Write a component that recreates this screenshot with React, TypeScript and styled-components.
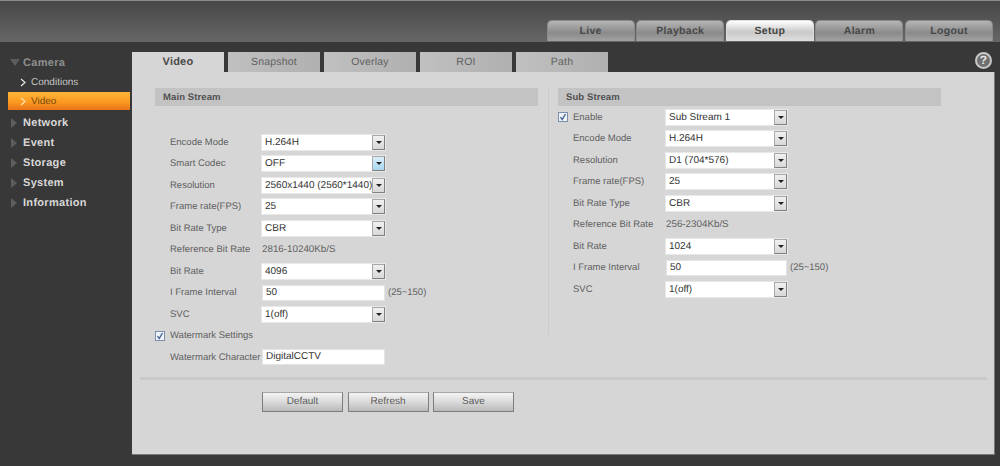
import React from "react";
import styled, { createGlobalStyle } from "styled-components";

const Global = createGlobalStyle`
  html, body { margin: 0; padding: 0; background: #383838; }
  * { box-sizing: border-box; }
`;

const Page = styled.div`
  position: relative;
  width: 1000px;
  height: 466px;
  overflow: hidden;
  background: #383838;
  font-family: "Liberation Sans", Arial, sans-serif;
  font-size: 10px;
  color: #5f5f5f;
  text-rendering: geometricPrecision;
  display: flex;
  flex-direction: column;
`;

const Header = styled.header`
  height: 42px;
  flex: none;
  padding: 20px 7px 0 0;
  display: flex;
  justify-content: flex-end;
  gap: 1.6px;
  border-top: 1px solid #8c8c8c;
  background: linear-gradient(#474747, #666666);
`;

const NavTab = styled.div<{ $active?: boolean }>`
  width: 88px;
  height: 21px;
  margin-top: -1px;
  border-radius: 5px 5px 0 0;
  border: 1px solid ${(p) => (p.$active ? "#dddddd" : "#8a8a8a")};
  border-bottom: 0;
  background: ${(p) =>
    p.$active
      ? "linear-gradient(#ffffff 0%, #c9c9c9 55%, #dedede 100%)"
      : "linear-gradient(#b5b5b5 0%, #8a8a8a 60%, #a2a2a2 100%)"};
  color: ${(p) => (p.$active ? "#444444" : "#484848")};
  font-size: 10.5px;
  font-weight: bold;
  letter-spacing: 0.3px;
  line-height: 21px;
  text-align: center;
`;

const Body = styled.div`
  flex: 1;
  display: flex;
  min-height: 0;
`;

const Sidebar = styled.nav`
  width: 132px;
  flex: none;
  padding: 10px 2px 0 8px;
`;

const MenuItem = styled.div<{ $dim?: boolean }>`
  height: 20px;
  padding-top: 1px;
  display: flex;
  align-items: center;
  gap: 2px;
  margin-left: 2px;
  font-size: 11px;
  font-weight: bold;
  letter-spacing: 0.3px;
  color: ${(p) => (p.$dim ? "#8f8f8f" : "#d8d8d8")};
`;

const MenuArrow = styled.svg`
  width: 11px;
  height: 10px;
  flex: none;
`;

const SubItem = styled.div<{ $active?: boolean }>`
  height: ${(p) => (p.$active ? "18px" : "20px")};
  margin-bottom: ${(p) => (p.$active ? "2px" : "0")};
  padding-left: 12px;
  padding-top: 1px;
  display: flex;
  align-items: center;
  gap: 4px;
  color: ${(p) => (p.$active ? "#7a4a10" : "#c4c4c4")};
  background: ${(p) =>
    p.$active ? "linear-gradient(#ffb53a, #fb9a20 55%, #e8741a)" : "transparent"};
`;

const Chevron = styled.svg`
  width: 7px;
  height: 9px;
  flex: none;
`;

const Main = styled.main`
  flex: 1;
  min-width: 0;
  padding: 10px 5px 11px 0;
  display: flex;
  flex-direction: column;
`;

const TabBar = styled.div`
  height: 20px;
  flex: none;
  display: flex;
  gap: 4px;
`;

const SubTab = styled.div<{ $active?: boolean }>`
  width: 92px;
  line-height: 20px;
  text-align: center;
  font-size: ${(p) => (p.$active ? "11px" : "10.5px")};
  font-weight: ${(p) => (p.$active ? "bold" : "normal")};
  letter-spacing: 0.2px;
  color: ${(p) => (p.$active ? "#4a4a4a" : "#606060")};
  background: ${(p) =>
    p.$active ? "#d6d6d6" : "linear-gradient(90deg, #c0c0c0, #b0b0b0)"};
`;

const HelpIcon = styled.div`
  position: absolute;
  left: 975px;
  top: 52px;
  width: 17px;
  height: 17px;
  border-radius: 50%;
  border: 2px solid #c8c8c8;
  background: #707070;
  color: #e8e8e8;
  font-size: 12px;
  font-weight: bold;
  line-height: 13px;
  text-align: center;
`;

const Panel = styled.section`
  flex: 1;
  background: #d6d6d6;
  border-right: 1px solid #777777;
  border-bottom: 1px solid #777777;
  padding-top: 16px;
  display: flex;
  flex-direction: column;
`;

const Columns = styled.div`
  height: 289px;
  flex: none;
  padding-left: 23px;
  display: flex;
`;

const Column = styled.div`
  width: 383px;
  flex: none;
`;

const ColumnRule = styled.div`
  width: 1px;
  height: 247px;
  flex: none;
  margin: 0 9px 0 10px;
  background: #cbcbcb;
`;

const StreamTitle = styled.h3<{ $gap: number }>`
  margin: 0 0 ${(p) => p.$gap}px;
  height: 18px;
  padding-left: 8px;
  background: #c3c3c3;
  color: #505050;
  font-size: 9.5px;
  font-weight: bold;
  line-height: 19px;
  letter-spacing: 0.1px;
`;

const Row = styled.div<{ $labelWidth: number; $flush?: boolean }>`
  height: 21.5px;
  padding-left: ${(p) => (p.$flush ? "0" : "15px")};
  display: grid;
  grid-template-columns: ${(p) => p.$labelWidth}px auto 1fr;
  align-items: center;
`;

const CheckRow = styled.div`
  height: 21.5px;
  display: flex;
  align-items: center;
  gap: 5px;
`;

const Label = styled.span`
  white-space: nowrap;
  font-size: 9.5px;
`;

const Value = styled.span`
  white-space: nowrap;
  font-size: 9.8px;
`;

const Note = styled.span`
  margin-left: 3px;
  font-size: 9.5px;
`;

const Check = styled.span`
  width: 10px;
  height: 10px;
  flex: none;
  border: 1px solid #7c8fae;
  background: #f0f2f6;
  display: flex;
  align-items: center;
  justify-content: center;
`;

const CheckMark = styled.svg`
  width: 8px;
  height: 8px;
`;

const SelectBox = styled.div<{ $width: number }>`
  width: ${(p) => p.$width}px;
  height: 15px;
  background: #ffffff;
  box-shadow: 0 0 0 1px #e8e8e8;
  display: flex;
  align-items: center;
  justify-content: space-between;
  padding-left: 3px;
  color: #333333;
  font-size: 10px;
  white-space: nowrap;
`;

const SelectButton = styled.span<{ $focus?: boolean }>`
  width: 13px;
  height: 15px;
  flex: none;
  border: 1px solid #8f8f8f;
  border-color: #a8a8a8 #808080 #808080 #a8a8a8;
  background: ${(p) =>
    p.$focus ? "linear-gradient(#d9eefa, #a9d6ef)" : "linear-gradient(#f0f0f0, #d8d8d8)"};
  display: flex;
  align-items: center;
  justify-content: center;
  &::after {
    content: "";
    border: 3px solid transparent;
    border-top: 3px solid #222222;
    border-bottom: 0;
  }
`;

const TextBox = styled.div<{ $width: number }>`
  width: ${(p) => p.$width}px;
  height: 16px;
  padding-left: 3px;
  background: #ffffff;
  border: 1px solid #e4e4e4;
  color: #333333;
  font-size: 10px;
  line-height: 14px;
`;

const Divider = styled.div`
  height: 3px;
  flex: none;
  margin: 0 7px 0 8px;
  background: #c8c8c8;
  border-radius: 2px;
`;

const Actions = styled.div`
  padding: 12px 0 0 130px;
  display: flex;
  gap: 4.5px;
`;

const ActionButton = styled.div`
  width: 81px;
  height: 20px;
  border: 1px solid #7d7d7d;
  border-top-color: #a8a8a8;
  background: linear-gradient(#f4f4f4, #dadada 50%, #b9b9b9);
  color: #5c5c5c;
  line-height: 18px;
  text-align: center;
`;

const Triangle = ({ open }: { open?: boolean }) => (
  <MenuArrow viewBox="0 0 11 10">
    {open ? (
      <polygon points="0,1 10,1 5,8" fill="#5d5d5d" />
    ) : (
      <polygon points="1,0 7,5 1,10" fill="#5d5d5d" />
    )}
  </MenuArrow>
);

const ChevronIcon = ({ color }: { color: string }) => (
  <Chevron viewBox="0 0 7 9">
    <polyline points="1,1 5,4.5 1,8" fill="none" stroke={color} strokeWidth="1.2" />
  </Chevron>
);

const CheckBox = () => (
  <Check>
    <CheckMark viewBox="0 0 8 8">
      <polyline points="1.5,4 3.2,6.5 6.5,1" fill="none" stroke="#3d5c95" strokeWidth="1.3" />
    </CheckMark>
  </Check>
);

const Select = ({ value, width, focus }: { value: string; width: number; focus?: boolean }) => (
  <SelectBox $width={width}>
    {value}
    <SelectButton $focus={focus} />
  </SelectBox>
);

type Field =
  | { label: string; select: string; focus?: boolean }
  | { label: string; text: string; note?: string }
  | { label: string; plain: string };

const mainFields: Field[] = [
  { label: "Encode Mode", select: "H.264H" },
  { label: "Smart Codec", select: "OFF", focus: true },
  { label: "Resolution", select: "2560x1440 (2560*1440)" },
  { label: "Frame rate(FPS)", select: "25" },
  { label: "Bit Rate Type", select: "CBR" },
  { label: "Reference Bit Rate", plain: "2816-10240Kb/S" },
  { label: "Bit Rate", select: "4096" },
  { label: "I Frame Interval", text: "50", note: "(25~150)" },
  { label: "SVC", select: "1(off)" },
];

const subFields: Field[] = [
  { label: "Encode Mode", select: "H.264H" },
  { label: "Resolution", select: "D1 (704*576)" },
  { label: "Frame rate(FPS)", select: "25" },
  { label: "Bit Rate Type", select: "CBR" },
  { label: "Reference Bit Rate", plain: "256-2304Kb/S" },
  { label: "Bit Rate", select: "1024" },
  { label: "I Frame Interval", text: "50", note: "(25~150)" },
  { label: "SVC", select: "1(off)" },
];

const FieldRow = ({ field, labelWidth, width }: { field: Field; labelWidth: number; width: number }) => (
  <Row $labelWidth={labelWidth}>
    <Label>{field.label}</Label>
    {"select" in field && <Select value={field.select} width={width} focus={field.focus} />}
    {"text" in field && <TextBox $width={width}>{field.text}</TextBox>}
    {"plain" in field && <Value>{field.plain}</Value>}
    {"note" in field && field.note && <Note>{field.note}</Note>}
  </Row>
);

const navTabs = ["Live", "Playback", "Setup", "Alarm", "Logout"];
const subTabs = ["Video", "Snapshot", "Overlay", "ROI", "Path"];
const menu = ["Network", "Event", "Storage", "System", "Information"];

export default function App() {
  return (
    <Page>
      <Global />
      <Header>
        {navTabs.map((t) => (
          <NavTab key={t} $active={t === "Setup"}>
            {t}
          </NavTab>
        ))}
      </Header>
      <Body>
        <Sidebar>
          <MenuItem $dim>
            <Triangle open />
            Camera
          </MenuItem>
          <SubItem>
            <ChevronIcon color="#e8e8e8" />
            Conditions
          </SubItem>
          <SubItem $active>
            <ChevronIcon color="#ffe2a8" />
            Video
          </SubItem>
          {menu.map((m) => (
            <MenuItem key={m}>
              <Triangle />
              {m}
            </MenuItem>
          ))}
        </Sidebar>
        <Main>
          <TabBar>
            {subTabs.map((t) => (
              <SubTab key={t} $active={t === "Video"}>
                {t}
              </SubTab>
            ))}
          </TabBar>
          <Panel>
            <Columns>
              <Column>
                <StreamTitle $gap={25.5}>Main Stream</StreamTitle>
                {mainFields.map((f) => (
                  <FieldRow key={f.label} field={f} labelWidth={92} width={123} />
                ))}
                <CheckRow>
                  <CheckBox />
                  <Label>Watermark Settings</Label>
                </CheckRow>
                <Row $labelWidth={92}>
                  <Label>Watermark Character</Label>
                  <TextBox $width={123}>DigitalCCTV</TextBox>
                </Row>
              </Column>
              <ColumnRule />
              <Column>
                <StreamTitle $gap={0.5}>Sub Stream</StreamTitle>
                <Row $flush $labelWidth={108}>
                  <CheckRow>
                    <CheckBox />
                    <Label>Enable</Label>
                  </CheckRow>
                  <Select value="Sub Stream 1" width={121} />
                </Row>
                {subFields.map((f) => (
                  <FieldRow key={f.label} field={f} labelWidth={93} width={121} />
                ))}
              </Column>
            </Columns>
            <Divider />
            <Actions>
              <ActionButton>Default</ActionButton>
              <ActionButton>Refresh</ActionButton>
              <ActionButton>Save</ActionButton>
            </Actions>
          </Panel>
        </Main>
      </Body>
      <HelpIcon>?</HelpIcon>
    </Page>
  );
}
